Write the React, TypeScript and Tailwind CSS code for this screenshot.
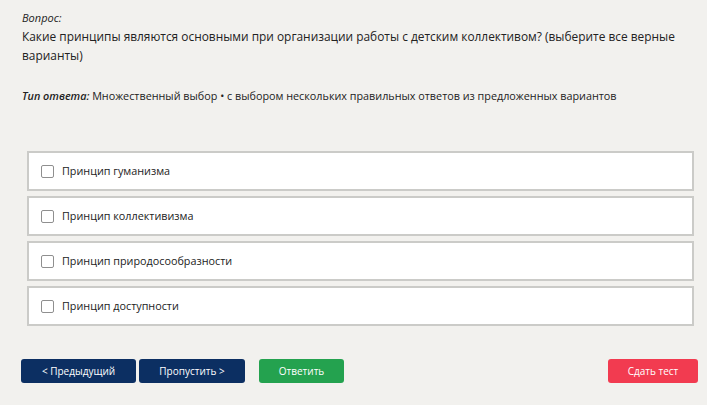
import React from "react";

const options = [
  "Принцип гуманизма",
  "Принцип коллективизма",
  "Принцип природосообразности",
  "Принцип доступности",
];

export default function App() {
  return (
    <div
      className="min-h-[405px] w-full bg-[#f2f1ee] text-[#222] pt-[10px]"
      style={{ fontFamily: '"Open Sans", "Noto Sans", sans-serif' }}
    >
      <div className="pl-[22px] pr-[30px]">
        <div className="text-[11px] italic leading-[15px]">Вопрос:</div>
        <div className="mt-[2px] text-[11.9px] leading-[19px]">
          Какие принципы являются основными при организации работы с детским
          коллективом? (выберите все верные варианты)
        </div>
        <div className="mt-[23px] text-[10.8px] leading-[15px]">
          <span className="italic font-semibold">Тип ответа:</span> Множественный
          выбор • с выбором нескольких правильных ответов из предложенных
          вариантов
        </div>
      </div>

      <div className="mt-[48px] ml-[27px] mr-[13px] flex flex-col gap-[5px]">
        {options.map((o) => (
          <label
            key={o}
            className="flex h-[40px] items-center gap-[8px] border-2 border-[#cbcbc8] bg-white pl-[12px]"
          >
            <span className="h-[13px] w-[13px] rounded-[2px] border border-[#8f8f8f] bg-white" />
            <span className="text-[10.8px]">{o}</span>
          </label>
        ))}
      </div>

      <div className="mt-[33px] flex items-center pl-[21px] pr-[9px] text-[10px] text-white">
        <button className="h-[24px] w-[115px] rounded-[3px] bg-[#0c2f62]">
          &lt; Предыдущий
        </button>
        <button className="ml-[3px] h-[24px] w-[106px] rounded-[3px] bg-[#0c2f62]">
          Пропустить &gt;
        </button>
        <button className="ml-[14px] h-[24px] w-[85px] rounded-[3px] bg-[#24a24f]">
          Ответить
        </button>
        <button className="ml-auto h-[24px] w-[90px] rounded-[3px] bg-[#f23b50]">
          Сдать тест
        </button>
      </div>
    </div>
  );
}
